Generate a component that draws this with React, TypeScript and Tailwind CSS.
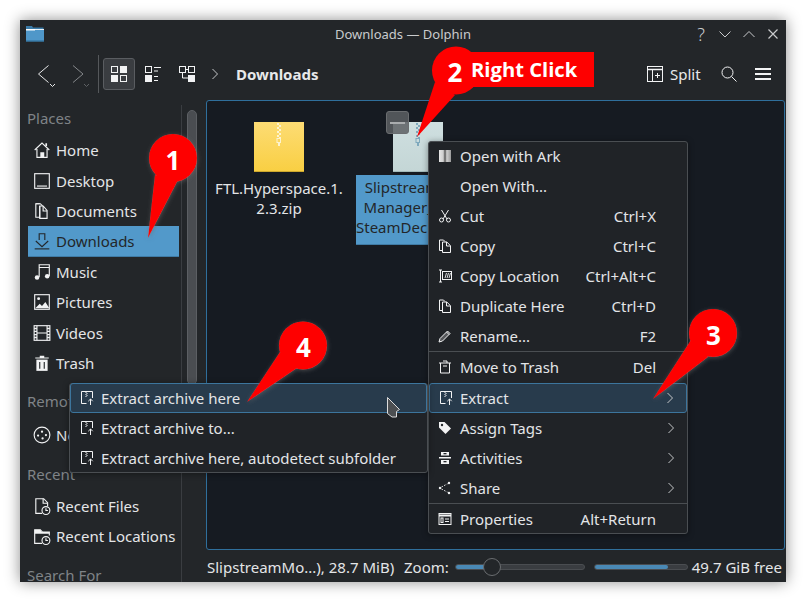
import React from "react";

const S = ({ children, size = 16, vb = 16, className = "" }: { children: React.ReactNode; size?: number; vb?: number; className?: string }) => (
  <svg width={size} height={size} viewBox={`0 0 ${vb} ${vb}`} fill="none" stroke="currentColor" strokeWidth={1} className={"shrink-0 " + className}>
    {children}
  </svg>
);
const Home = () => <S size={18}><path d="M1.5 8 8 1.8 14.5 8M3.5 7v7.5h9V7" /><rect x="6.5" y="10" width="3.5" height="4.5" fill="currentColor" stroke="none" /><rect x="11" y="2" width="1.5" height="2.5" fill="currentColor" stroke="none" /></S>;
const Desktop = () => <S size={18}><rect x="1.5" y="1.5" width="13" height="13" /><path d="M3.5 12.5h9" /></S>;
const Docs = () => <S size={18}><path d="M6 13.5H2.5v-12H6M6 3.5h3l3.5 4v7H6z" /><path d="M6 3.5v10.5M9 3.5V8h3.5" /><path d="M2.5 1.5h4l2 2" /></S>;
const Down = () => <S size={18}><path d="M5.5 7V1.5h5V7M2.5 8 8 13l5.5-5" /><path d="M1.5 15h13" /></S>;
const Music = () => <S size={18}><path d="M5.5 12.5V1.5h9v10M5.5 4h9" /><circle cx="3.6" cy="12.8" r="2" fill="currentColor" stroke="none" /><circle cx="12.6" cy="11.8" r="2" fill="currentColor" stroke="none" /></S>;
const Pic = () => <S size={18}><rect x="1.5" y="1.5" width="13" height="13" /><circle cx="5" cy="5" r="1.3" fill="currentColor" stroke="none" /><path d="M2 13.5 6 9.5 8 11.5 11 8 14.5 13.5z" fill="currentColor" stroke="none" /></S>;
const Video = () => <S size={18}><rect x="1" y="1.5" width="14" height="13" /><path d="M3.5 1.5v13M12.5 1.5v13M3.5 8h9" /><path d="M1 4h2.5M1 6.500h2.500M1 9.500h2.500M1 12h2.500M12.500 4H15M12.500 6.500H15M12.500 9.500H15M12.500 12H15" strokeWidth={1.2} /></S>;
const Trash = () => <S size={18}><path d="M2 3h12v1H2zM6 1.500h4V3H6z" fill="currentColor" stroke="none" /><path d="M3 5h10v10H3z" fill="currentColor" stroke="none" /><path d="M6 7v6M10 7v6" stroke="#232629" /></S>;
const Net = () => <S size={18}><circle cx="8" cy="8" r="7" /><circle cx="4.500" cy="8.500" r="1" fill="currentColor" stroke="none" /><circle cx="8" cy="5" r="1" fill="currentColor" stroke="none" /><circle cx="11.500" cy="8" r="1" fill="currentColor" stroke="none" /><circle cx="8.500" cy="11" r="1" fill="currentColor" stroke="none" /></S>;
const RecentFile = () => <S size={18}><path d="M8 14.500H2.500v-13h7l3.500 3.500v3" /><path d="M9 1.500V5.500h4" /><circle cx="11.500" cy="12" r="3.500" /><path d="M11.500 10v2h1.800" /></S>;
const RecentLoc = () => <S size={18}><path d="M8 14.500H1.500v-12h5l2 2h6v3" /><path d="M1.500 2.500h5l1 2h7v1.500h-13z" fill="currentColor" stroke="none" /><circle cx="11.500" cy="12" r="3.500" /><path d="M11.500 10v2h1.800" /></S>;
const Extract = () => <S size={16}><path d="M7.500 13.500H2.500v-12h11v6.500" /><path d="M7 2v1M8 3v1M7 4v1M8 5v1M7 6v1" /><path d="M11.500 15V9M9.300 11.200 11.500 9l2.200 2.200" /></S>;
const Ark = () => <svg width={14} height={14} viewBox="0 0 14 14" className="shrink-0"><defs><linearGradient id="arkg" x1="0" x2="1" y1="0" y2="0"><stop offset="0" stopColor="#e6e6e6" /><stop offset=".35" stopColor="#cfcfcf" /><stop offset=".5" stopColor="#555" /><stop offset=".65" stopColor="#cfcfcf" /><stop offset="1" stopColor="#9a9a9a" /></linearGradient></defs><rect x="1" y="1" width="12" height="12" fill="url(#arkg)" /></svg>;
const Cut = () => <S size={14} vb={14}><path d="M3.500 1 9 10M10.500 1 5 10" /><circle cx="3.500" cy="11" r="2" /><circle cx="10.500" cy="11" r="2" /></S>;
const Copy = () => <S size={14} vb={14}><path d="M4.500 11.500h-3V1h4l1.500 1.500" /><path d="M4.500 3h4.300L12.500 6.700v6.800h-8z" /><path d="M8.500 3v4h4" /></S>;
const CopyLoc = () => <S size={14} vb={14}><path d="M1 1h3M1 13h3M2.500 1v12" /><rect x="4.500" y="2.500" width="9" height="8" /><path d="M7 9l1.500-5M9 9l1.500-5M11 9l1.500-5" strokeWidth={.9} /></S>;
const Rename = () => <S size={14} vb={14}><path d="M1 13l1-3.500L9.500 2l2.500 2.500L4.500 12z" fill="currentColor" fillOpacity={.25} /><path d="M8.500 3l2.500 2.500" /></S>;
const MoveTrash = () => <S size={14} vb={14}><path d="M1 3h12M5 1h4v2M2.500 3v10h9V3" /><path d="M5 6h4" /></S>;
const Tag = () => <S size={14} vb={14}><path d="M1 1h5.500L13 7.500 7.500 13 1 6.500z" fill="currentColor" stroke="none" /><circle cx="4" cy="4" r="1.200" fill="#232629" stroke="none" /></S>;
const Act = () => <S size={14} vb={14}><path d="M3 1h8v3.500H3zM1 6h12v1.500H1zM3 9h8v4H3z" fill="currentColor" stroke="none" /><rect x="5.500" y="2" width="3" height="1.300" fill="#232629" stroke="none" /><rect x="5.500" y="10" width="3" height="1.300" fill="#232629" stroke="none" /></S>;
const Share = () => <S size={14} vb={14}><circle cx="2" cy="7" r="1.200" fill="currentColor" stroke="none" /><circle cx="11" cy="2" r="1.200" fill="currentColor" stroke="none" /><circle cx="11" cy="12" r="1.200" fill="currentColor" stroke="none" /><path d="M3.500 6 9.500 2.800M3.500 8l6 3.200" strokeDasharray="1.500 1.500" /></S>;
const Props = () => <S size={14} vb={14}><rect x="1" y="1.500" width="12" height="11" /><path d="M1 3.500h12" strokeWidth={2} /><rect x="3" y="6" width="2" height="4.500" /><path d="M7 7h4M7 9.500h4" /></S>;
const Chev = () => <svg width={8} height={12} viewBox="0 0 8 12" fill="none" stroke="#c5c7c9" strokeWidth={1} className="shrink-0"><path d="M1.500 1 6.500 6 1.500 11" /></svg>;

const SideItem = ({ icon, label, active, className = "" }: { icon: React.ReactNode; label: string; active?: boolean; className?: string }) => (
  <div className={`h-[30.400px] w-[151px] flex items-center gap-[5px] pl-[5px] shrink-0 ${active ? "bg-[#5299ca] text-[#232629] border-b border-[#3f7ba5]" : "text-[#e3e5e7]"} ${className}`}>
    <span className={`flex w-[18px] justify-center ${active ? "text-[#232629]" : "text-[#f2f3f4]"}`}>{icon}</span>
    <span className="whitespace-nowrap">{label}</span>
  </div>
);
const SideHead = ({ label, className = "" }: { label: string; className?: string }) => (
  <div className={`h-[20px] flex items-center pl-[6px] text-[#7f8387] shrink-0 ${className}`}>{label}</div>
);

const MenuRow = ({ icon, label, shortcut, arrow, hi, className = "" }: { icon?: React.ReactNode; label: string; shortcut?: string; arrow?: boolean; hi?: boolean; className?: string }) => (
  <div className={`h-[30px] flex items-center shrink-0 pr-[31px] relative text-[#e3e5e7] ${hi ? "pl-[8px] bg-[#283b4c] border border-[#3c759d] rounded-[3px]" : "pl-[9px]"} ${className}`}>
    <span className="w-[22px] flex text-[#f2f3f4]">{icon}</span>
    <span className="whitespace-nowrap">{label}</span>
    <span className="ml-auto whitespace-nowrap">{shortcut}</span>
    {arrow && <span className={`absolute right-[12px] ${hi ? "top-[8px]" : "top-[9px]"}`}><Chev /></span>}
  </div>
);
const Sep = () => <div className="h-px bg-[#4a4e52] shrink-0" />;

const ZipIcon = ({ from, to, zip, stem }: { from: string; to: string; zip: string; stem: string }) => (
  <svg width={50} height={50} viewBox="0 0 50 50" className="shrink-0">
    <defs><linearGradient id={"g" + from.slice(1)} x1="0" x2="0" y1="0" y2="1"><stop offset="0" stopColor={from} /><stop offset="1" stopColor={to} /></linearGradient></defs>
    <rect width="50" height="50" fill={`url(#g${from.slice(1)})`} />
    <rect y="49" width="50" height="1" fill={stem} opacity=".6" />
    {[0, 2, 4, 6, 8, 10, 12, 14].map((y) => <rect key={y} x={y % 4 === 0 ? 23 : 25} y={y + 1} width="2" height="2" fill={zip} />)}
    <rect x="23" y="16.500" width="3.500" height="4" fill="none" stroke={zip} />
    <rect x="24" y="20" width="2" height="4" fill={zip} />
  </svg>
);

const Callouts = () => (
  <svg width={806} height={602} viewBox="0 0 806 602" className="absolute left-0 top-0 pointer-events-none">
    <defs>
      <filter id="sh" x="-20%" y="-20%" width="140%" height="140%"><feDropShadow dx="0.500" dy="1" stdDeviation="2" floodColor="#6a6a6a" floodOpacity=".6" /></filter>
    </defs>
    <g fill="#fe0000">
      <rect x="470" y="52" width="124" height="35" />
      <circle cx="456" cy="70.500" r="24" /><path d="M435 82 417 137 455 95z" />
    </g>
    <g fill="#fe0000" filter="url(#sh)">
      <circle cx="173" cy="158" r="24" /><path d="M155 175 148 238 178 180z" />
      <circle cx="713" cy="333" r="24" /><path d="M691 340 653 399 708 357z" />
      <circle cx="303" cy="345.500" r="24" /><path d="M280 352 247 402 297 368z" />
    </g>
  </svg>
);
const Num = ({ n, className }: { n: string; className: string }) => (
  <span className={`absolute text-white font-bold text-[26px] leading-[30px] font-['Noto_Sans',sans-serif] ${className}`}>{n}</span>
);

const Cursor = () => (
  <svg width={15} height={22} viewBox="0 0 15 22" className="absolute left-[386px] top-[396px]">
    <path d="M1.500 1.500 13.500 13.500 10.500 15.500 10.500 21 6 21 1.500 17.500z" fill="#4c4f52" stroke="#dcdcdc" strokeWidth={1} />
  </svg>
);

export default function App() {
  return (
    <div className="relative w-[806px] h-[602px] bg-white overflow-hidden p-[20px] text-[15px] leading-[20px] font-['Noto_Sans',sans-serif]">
      <div className="w-[766px] h-[562px] bg-[#232629] flex flex-col overflow-hidden shadow-[0_0_14px_rgba(0,0,0,.45)]">
        {/* title */}
        <div className="h-[28px] shrink-0 flex items-center px-[5px] text-[#c9cbcd] text-[13px]">
          <div className="w-[110px] flex">
            <svg width={20} height={18} viewBox="0 0 20 18"><path d="M1 4V1h6l1 1.500h10.500V4z" fill="#3b7ba8" /><path d="M1 4h18v12.500H1z" fill="#4f97c9" /><path d="M1 4h18v1H1z" fill="#eaf3f9" /><path d="M1 4h9v1.500H1z" fill="#fff" /><path d="M1 15.500h18v1H1z" fill="#2d6a94" /></svg>
          </div>
          <span className="flex-1 text-center whitespace-nowrap">Downloads — Dolphin</span>
          <div className="w-[110px] flex items-center justify-end gap-[10px] pr-[1px] text-[#c9cbcd]">
            <span className="w-[14px] text-center text-[18px] font-light">?</span>
            <svg width={14} height={14} viewBox="0 0 14 14" fill="none" stroke="currentColor"><path d="M1.500 4.500 7 10l5.500-5.500" /></svg>
            <svg width={14} height={14} viewBox="0 0 14 14" fill="none" stroke="currentColor"><path d="M1.500 10 7 4.500 12.500 10" /></svg>
            <svg width={14} height={14} viewBox="0 0 14 14" fill="none" stroke="currentColor" strokeWidth={1.200}><path d="M2.500 2.500l9 9M11.500 2.500l-9 9" /></svg>
          </div>
        </div>
        {/* toolbar */}
        <div className="h-[52px] shrink-0 flex items-center pl-[17px] pr-[15px] text-[#e8e9ea]">
          <div className="w-[20px] flex relative">
            <svg width={14} height={20} viewBox="0 0 14 20" fill="none" stroke="#e8e9ea"><path d="M11.500 1.500 1.500 10l10 8.500" /></svg>
            <svg width={7} height={5} viewBox="0 0 7 5" fill="none" stroke="#e8e9ea" className="absolute left-[12px] top-[19px]"><path d="M1 1l2.500 2.500L6 1" /></svg>
          </div>
          <div className="w-[20px] ml-[14px] flex relative">
            <svg width={14} height={20} viewBox="0 0 14 20" fill="none" stroke="#85888b"><path d="M2 1.500 12 10 2 18.500" /></svg>
            <svg width={7} height={5} viewBox="0 0 7 5" fill="none" stroke="#5e6164" className="absolute left-[12px] top-[19px]"><path d="M1 1l2.500 2.500L6 1" /></svg>
          </div>
          <div className="w-px h-[38px] bg-[#55585b] ml-[7px]" />
          <div className="w-[32px] h-[32px] ml-[4px] bg-[#3a3d41] border border-[#5a5d61] rounded-[3px] flex items-center justify-center">
            <svg width={16} height={16} viewBox="0 0 16 16" fill="none" stroke="#f2f3f4"><rect x=".500" y=".500" width="6" height="6" /><rect x="9" y="0" width="7" height="7" fill="#f2f3f4" stroke="none" /><rect x="0" y="9" width="7" height="7" fill="#f2f3f4" stroke="none" /><rect x="9.500" y="9.500" width="6" height="6" /></svg>
          </div>
          <svg width={16} height={16} viewBox="0 0 16 16" fill="none" stroke="#f2f3f4" className="ml-[10px]"><rect x=".500" y=".500" width="6" height="6" /><path d="M9 1.500h7M9 5h4" /><rect x="0" y="9" width="7" height="7" fill="#f2f3f4" stroke="none" /><path d="M9 10.500h4M9 14.500h4" /></svg>
          <svg width={16} height={16} viewBox="0 0 16 16" fill="none" stroke="#f2f3f4" className="ml-[18px]"><rect x=".500" y=".500" width="6" height="6" /><rect x="9.500" y=".500" width="6" height="6" /><path d="M6.500 3.500h3M3.500 6.500V12H9" /><rect x="9" y="9" width="7" height="7" fill="#f2f3f4" stroke="none" /></svg>
          <svg width={8} height={12} viewBox="0 0 8 12" fill="none" stroke="#c5c7c9" className="ml-[16px]"><path d="M1.500 1 6.500 6 1.500 11" /></svg>
          <span className="ml-[17px] font-bold text-[#e8e9ea]">Downloads</span>
          <svg width={16} height={16} viewBox="0 0 16 16" fill="none" stroke="#f2f3f4" className="ml-auto"><rect x=".500" y=".500" width="15" height="15" /><path d="M.500 3.500h15" strokeWidth={1.500} /><path d="M5.500 3.500v12M8 9.500h5M10.500 7v5" /></svg>
          <span className="ml-[7px] w-[51px]">Split</span>
          <svg width={16} height={16} viewBox="0 0 16 16" fill="none" stroke="#f2f3f4"><circle cx="6.500" cy="6.500" r="5.500" /><path d="M10.500 10.500l5 5" /></svg>
          <svg width={16} height={12} viewBox="0 0 16 12" fill="#f2f3f4" className="ml-[18px]"><rect width="16" height="2" /><rect y="5" width="16" height="2" /><rect y="10" width="16" height="2" /></svg>
        </div>
        {/* body */}
        <div className="flex-1 flex min-h-0">
          <div className="w-[162px] shrink-0 border-r border-[#3a3d41] pl-[1px] flex flex-col overflow-hidden mt-[5px] pt-[3px]">
            <SideHead label="Places" className="mb-[7.200px] pl-[6px]" />
            <div className="pl-[7px] flex flex-col">
              <SideItem icon={<Home />} label="Home" />
              <SideItem icon={<Desktop />} label="Desktop" />
              <SideItem icon={<Docs />} label="Documents" />
              <SideItem icon={<Down />} label="Downloads" active />
              <SideItem icon={<Music />} label="Music" />
              <SideItem icon={<Pic />} label="Pictures" />
              <SideItem icon={<Video />} label="Videos" />
              <SideItem icon={<Trash />} label="Trash" />
            </div>
            <SideHead label="Remote" className="mt-[13px] mb-[8px]" />
            <div className="pl-[7px] flex flex-col">
              <SideItem icon={<Net />} label="Network" />
            </div>
            <SideHead label="Recent" className="mt-[14px] mb-[7px]" />
            <div className="pl-[7px] flex flex-col">
              <SideItem icon={<RecentFile />} label="Recent Files" />
              <SideItem icon={<RecentLoc />} label="Recent Locations" />
            </div>
            <SideHead label="Search For" className="mt-[14px]" />
          </div>
          <div className="w-[24px] shrink-0 pl-[5px] pt-[10px]">
            <div className="w-[10px] h-[275px] rounded-full bg-[#4a4d51] border border-[#5c5f63]" />
          </div>
          <div className="flex-1 flex flex-col min-w-0 pr-[1px]">
            <div className="flex-1 bg-[#161b22] border border-[#2f6f9c] rounded-[3px] flex items-start relative pt-[21px] pl-[5px]">
              <div className="w-[134px] flex flex-col items-center text-center text-[#e3e5e7]">
                <ZipIcon from="#fddc74" to="#f9cf42" zip="#fdf3cf" stem="#b08f20" />
                <div className="mt-[6px] leading-[20px] w-[134px] pb-[1px]">FTL.Hyperspace.1.<br />2.3.zip</div>
              </div>
              <div className="w-[124px] ml-[10px] flex flex-col items-center text-center">
                <ZipIcon from="#cfdfe0" to="#c4d6d6" zip="#7fa9bd" stem="#8fa9a9" />
                <div className="mt-[3px] w-[124px] h-[70px] pt-[2px] bg-[#5299ca] border-b border-[#3f7ba5] text-[#232629] leading-[20px] whitespace-nowrap overflow-hidden">SlipstreamMod<br />Manager_1.9.1-<br />SteamDeck_m.zip</div>
              </div>
              <div className="absolute left-[179px] top-[10px] w-[23px] h-[23px] bg-[#5c5f63]/85 border border-[#6a6d70] rounded-[3px] flex items-center justify-center">
                <div className="w-[15px] h-[2px] bg-[#a9acae]" />
              </div>
            </div>
            <div className="h-[32px] shrink-0 flex items-center pt-[1px] text-[#e3e5e7] whitespace-nowrap pl-[1px]">
              <span className="w-[197px]">SlipstreamMo...), 28.7 MiB)</span>
              <span>Zoom:</span>
              <div className="relative ml-[6px] w-[130px] h-[6px] rounded-full bg-[#3a3d41] border border-[#4a4d51]">
                <div className="w-[32px] h-full rounded-l-full bg-[#4a89b5]" />
                <div className="absolute left-[27px] top-[-7px] w-[18px] h-[18px] rounded-full bg-[#232629] border border-[#6a6d70]" />
              </div>
              <div className="ml-[9px] w-[94px] h-[6px] rounded-full bg-[#3a3d41] border border-[#4a4d51]">
                <div className="w-[73px] h-full rounded-full bg-[#4a89b5]" />
              </div>
              <span className="ml-[4px]">49.7 GiB free</span>
            </div>
          </div>
        </div>
      </div>

      {/* context menu */}
      <div className="absolute left-[428px] top-[141px] w-[260px] h-[393px] bg-[#202327] border border-[#4a4e52] rounded-[3px] flex flex-col shadow-[0_1px_6px_rgba(0,0,0,.4)]">
        <MenuRow icon={<Ark />} label="Open with Ark" className="-mt-[1px]" />
        <MenuRow label="Open With..." />
        <MenuRow icon={<Cut />} label="Cut" shortcut="Ctrl+X" />
        <MenuRow icon={<Copy />} label="Copy" shortcut="Ctrl+C" />
        <MenuRow icon={<CopyLoc />} label="Copy Location" shortcut="Ctrl+Alt+C" />
        <MenuRow icon={<Copy />} label="Duplicate Here" shortcut="Ctrl+D" />
        <MenuRow icon={<Rename />} label="Rename..." shortcut="F2" />
        <Sep />
        <MenuRow icon={<MoveTrash />} label="Move to Trash" shortcut="Del" />
        <MenuRow icon={<Extract />} label="Extract" arrow hi className="mt-[1px]" />
        <MenuRow icon={<Tag />} label="Assign Tags" arrow />
        <MenuRow icon={<Act />} label="Activities" arrow />
        <MenuRow icon={<Share />} label="Share" arrow />
        <Sep />
        <MenuRow icon={<Props />} label="Properties" shortcut="Alt+Return" />
      </div>
      {/* submenu */}
      <div className="absolute left-[69px] top-[383px] w-[359px] h-[90px] bg-[#202327] border border-[#4a4e52] rounded-[3px] flex flex-col shadow-[0_1px_6px_rgba(0,0,0,.4)]">
        <MenuRow icon={<Extract />} label="Extract archive here" hi className="-mt-[1px] h-[29.500px]" />
        <MenuRow icon={<Extract />} label="Extract archive to..." />
        <MenuRow icon={<Extract />} label="Extract archive here, autodetect subfolder" />
      </div>
      <Cursor />
      <Callouts />
      <Num n="1" className="left-[165.500px] top-[145px]" />
      <Num n="2" className="left-[447.500px] top-[56.500px]" />
      <Num n="3" className="left-[706px] top-[319.500px]" />
      <Num n="4" className="left-[296px] top-[331.500px]" />
      <span className="absolute left-[471px] top-[56px] text-white font-bold text-[20.200px] leading-[27px] whitespace-nowrap font-['Open_Sans','Noto_Sans',sans-serif]">Right Click</span>
    </div>
  );
}
